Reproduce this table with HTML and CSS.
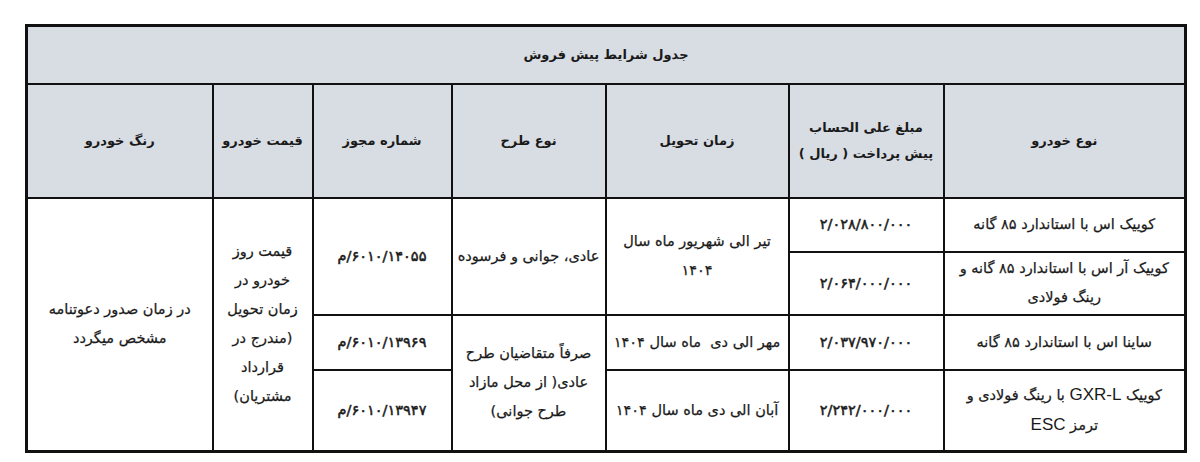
FILE: index.html
```html
<!DOCTYPE html>
<html lang="fa" dir="rtl">
<head>
<meta charset="utf-8">
<title>جدول شرایط پیش فروش</title>
<link rel="stylesheet" href="styles.css">
</head>
<body>
<div class="page">
<table class="sale">
  <colgroup>
    <col class="c-car"><col class="c-amount"><col class="c-time"><col class="c-plan"><col class="c-license"><col class="c-price"><col class="c-color">
  </colgroup>
  <thead>
    <tr class="r-title"><th colspan="7">جدول شرایط پیش فروش</th></tr>
    <tr class="r-head">
      <th>نوع خودرو</th>
      <th>مبلغ علی الحساب<br>پیش پرداخت ( ریال )</th>
      <th>زمان تحویل</th>
      <th>نوع طرح</th>
      <th>شماره مجوز</th>
      <th>قیمت خودرو</th>
      <th>رنگ خودرو</th>
    </tr>
  </thead>
  <tbody>
    <tr class="r1">
      <td>کوییک اس با استاندارد ۸۵ گانه</td>
      <td class="num">۲/۰۲۸/۸۰۰/۰۰۰</td>
      <td rowspan="2">تیر الی شهریور ماه سال<br>۱۴۰۴</td>
      <td rowspan="2">عادی، جوانی و فرسوده</td>
      <td rowspan="2" class="num">۶۰۱۰/۱۴۰۵۵/م</td>
      <td rowspan="4" class="tall">قیمت روز<br>خودرو در<br>زمان تحویل<br>(مندرج در<br>قرارداد<br>مشتریان)</td>
      <td rowspan="4">در زمان صدور دعوتنامه<br>مشخص میگردد</td>
    </tr>
    <tr class="r2">
      <td>کوییک آر اس با استاندارد ۸۵ گانه و<br>رینگ فولادی</td>
      <td class="num">۲/۰۶۴/۰۰۰/۰۰۰</td>
    </tr>
    <tr class="r3">
      <td>ساینا اس با استاندارد ۸۵ گانه</td>
      <td class="num">۲/۰۳۷/۹۷۰/۰۰۰</td>
      <td>مهر الی دی&nbsp; ماه سال ۱۴۰۴</td>
      <td rowspan="2">صرفاً متقاضیان طرح<br>عادی( از محل مازاد<br>طرح جوانی)</td>
      <td class="num">۶۰۱۰/۱۳۹۶۹/م</td>
    </tr>
    <tr class="r4">
      <td>کوییک <span class="latin">GXR-L</span> با رینگ فولادی و<br>ترمز <span class="latin">ESC</span></td>
      <td class="num">۲/۲۴۲/۰۰۰/۰۰۰</td>
      <td>آبان الی دی ماه سال ۱۴۰۴</td>
      <td class="num">۶۰۱۰/۱۳۹۴۷/م</td>
    </tr>
  </tbody>
</table>
</div>
</body>
</html>
```

FILE: styles.css
```css
html, body {
  margin: 0;
  padding: 0;
  background: #ffffff;
}

.page {
  padding: 24px 13px 0 28px;
}

.sale {
  width: 1159px;
  border-collapse: collapse;
  table-layout: fixed;
  font-family: "DejaVu Sans", "Noto Sans", sans-serif;
  font-size: 14.5px;
  color: #1a1a1a;
  border: 3px solid #111;
}

.c-car { width: 242px; }
.c-amount { width: 155px; }
.c-time { width: 183px; }
.c-plan { width: 154px; }
.c-license { width: 139px; }
.c-price { width: 100px; }
.c-color { width: 186px; }

.sale th,
.sale td {
  border: 2px solid #111;
  text-align: center;
  vertical-align: middle;
  padding: 0 2px;
  line-height: 29px;
  white-space: nowrap;
}

.sale th {
  background: #d8dce3;
  font-weight: bold;
  font-size: 13px;
}

.sale td {
  font-weight: normal;
  -webkit-text-stroke: 0.25px #1a1a1a;
}

.r-title { height: 58px; }
.r-head { height: 114px; }
.r1 { height: 54px; }
.r2 { height: 63px; }
.r3 { height: 55px; }
.r4 { height: 82px; }

.r-head th { line-height: 26px; }

.tall { padding-bottom: 6px; }

.sale td.num {
  font-size: 14.5px;
  letter-spacing: 0.3px;
  -webkit-text-stroke: 0.5px #1a1a1a;
}

.latin {
  font-family: "Liberation Sans", sans-serif;
  font-size: 17px;
  -webkit-text-stroke: 0;
}
```
